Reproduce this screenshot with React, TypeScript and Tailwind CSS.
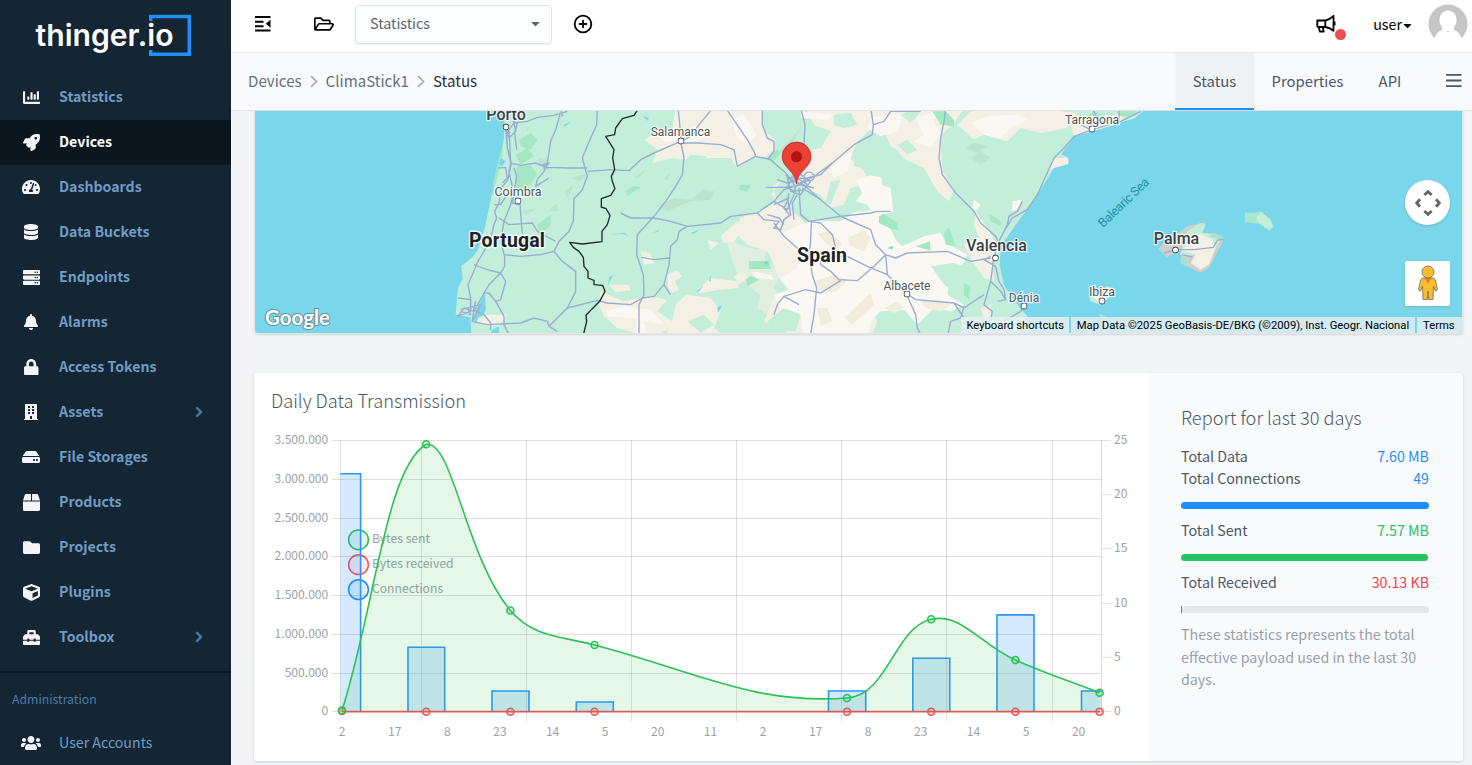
import React from "react";
import {
  FaBell, FaBox, FaBuilding, FaChartBar, FaChevronRight, FaCube, FaDatabase, FaFolder, FaHdd,
  FaLock, FaRegFolderOpen, FaRocket, FaServer, FaTachometerAlt, FaToolbox, FaUsers, FaCaretDown,
} from "react-icons/fa";
import type { IconType } from "react-icons";
import { CirclePlus } from "lucide-react";

const nav: { label: string; icon: IconType; size: number; more?: boolean }[] = [
  { label: "Statistics", icon: FaChartBar, size: 17 },
  { label: "Devices", icon: FaRocket, size: 17 },
  { label: "Dashboards", icon: FaTachometerAlt, size: 18 },
  { label: "Data Buckets", icon: FaDatabase, size: 16 },
  { label: "Endpoints", icon: FaServer, size: 17 },
  { label: "Alarms", icon: FaBell, size: 16 },
  { label: "Access Tokens", icon: FaLock, size: 16.5 },
  { label: "Assets", icon: FaBuilding, size: 16, more: true },
  { label: "File Storages", icon: FaHdd, size: 18 },
  { label: "Products", icon: FaBox, size: 17 },
  { label: "Projects", icon: FaFolder, size: 17 },
  { label: "Plugins", icon: FaCube, size: 17 },
  { label: "Toolbox", icon: FaToolbox, size: 17, more: true },
];

function Sidebar() {
  return (
    <aside className="flex h-full w-[231px] shrink-0 flex-col bg-[#142533]">
      <div className="h-[75px] shrink-0 pl-[30px] pt-[10px]">
        <svg width="166" height="50" viewBox="30 10 166 50">
          <path d="M150.750 21V16.500H189.250V54.250H150.750V50" fill="none" stroke="#1f8efa" strokeWidth="3.500" />
          <text x="35.500" y="46" textLength="138" lengthAdjust="spacingAndGlyphs" className="fill-white font-['Inter',sans-serif] text-[30px] font-semibold">thinger.io</text>
        </svg>
      </div>
      <nav className="flex flex-col">
        {nav.map(({ label, icon: Icon, size, more }) => {
          const active = label === "Devices";
          return (
            <a key={label} className={active ? "flex h-[45px] items-center bg-[#0b161f] text-white" : "flex h-[45px] items-center text-[#6f9cc4]"}>
              <span className="ml-[19px] flex w-6 justify-center pb-px text-[#f3f5f8]"><Icon size={size} /></span>
              <span className="ml-4 pb-[4px] text-[14.150px] leading-5 font-bold">{label}</span>
              {more && <FaChevronRight size={12} className="mr-[26px] mb-[2px] ml-auto stroke-current stroke-[30px] text-[#4a7ba8]" />}
            </a>
          );
        })}
      </nav>
      <div className="mt-[11px] h-[2px] shrink-0 bg-[#0b1822]" />
      <div className="mt-[16px] pl-3 text-[12.250px] leading-5 text-[#4a7ba5]">Administration</div>
      <a className="mt-[11px] flex h-[45px] shrink-0 items-center text-[#6f9cc4]">
        <span className="ml-[19px] flex w-6 justify-center text-[#f3f5f8]"><FaUsers size={20} /></span>
        <span className="ml-4 pb-[2px] text-[14.200px] leading-5">User Accounts</span>
      </a>
    </aside>
  );
}

function Header() {
  return (
    <header className="flex h-[53px] shrink-0 items-center border-b border-[#e4e6ea] bg-white text-black">
      <svg className="-mt-[4px] ml-[24px]" width="16" height="16" viewBox="0 0 16 16" fill="currentColor">
        <path d="M0 0h15.500v2H0zM0 4.700h8.500v2H0zM0 9.200h8.500v2H0zM0 13.500h15.500v2H0zM15.500 3.800v8L10.800 7.800z" />
      </svg>
      <FaRegFolderOpen size={20} className="-mt-[5px] ml-[43px]" />
      <div className="-mt-[3px] ml-[21px] flex h-[39px] w-[197px] items-center rounded border border-[#dce5e3] bg-[#fcfdfd] pr-[9px] pl-[14px] shadow-xs">
        <span className="pb-[3px] text-[14.300px] leading-5 text-[#5b6670]">Statistics</span>
        <FaCaretDown size={13} className="mb-[2px] ml-auto text-[#56626c]" />
      </div>
      <CirclePlus size={20} strokeWidth={2.200} className="-mt-[5px] ml-[21px]" />
      <svg className="-mt-px ml-auto" width="32" height="28" viewBox="1315 12 32 28" fill="none" stroke="#000" strokeWidth="1.800" strokeLinejoin="round">
        <path d="M1317.300 20.500h8v6.500h-7.200q-.8 0-.8-.8zM1325.300 20.500q4.500-1 8.200-4.700v15q-3.700-3.200-8.200-3.800M1318.700 27l1.300 4.700h3.700l-1-4.700M1334.600 21.500v4" />
        <circle cx="1340.500" cy="34.500" r="5.500" fill="#ef4e50" stroke="none" />
      </svg>
      <span className="ml-[26px] pb-[5px] text-[14.300px] leading-5">user</span>
      <FaCaretDown size={13} className="-ml-[1px] mb-px" />
      <svg className="-mt-[4px] mr-[4px] ml-[14px]" width="40" height="40" viewBox="0 0 40 40">
        <circle cx="20" cy="20" r="19.500" fill="#c6c6c6" />
        <ellipse cx="20" cy="16" rx="8.700" ry="9.500" fill="#fff" />
        <path d="M4 40L7 33Q9 27 15.500 25.500L20 28L24.500 25.500Q31 27 33 33L36 40Z" fill="#fff" />
        <path d="M14 22h12v5h-12z" fill="#fff" />
      </svg>
    </header>
  );
}

function SubHeader() {
  return (
    <div className="flex h-[58px] shrink-0 items-stretch border-b border-[#e3e5e9] bg-[#f9fafc] text-[14.850px] leading-5 text-[#4d5965]">
      <div className="ml-[17px] flex items-center pb-[3px] text-[15.100px] text-[#66717c]">
        <span>Devices</span>
        <svg width="8" height="13" viewBox="0 0 8 13" className="mx-2 mt-[3px]" fill="none" stroke="#9ba6b2" strokeWidth="1.600"><path d="M1 1l5.500 5.500L1 12" /></svg>
        <span>ClimaStick1</span>
        <svg width="8" height="13" viewBox="0 0 8 13" className="mx-2 mt-[3px]" fill="none" stroke="#9ba6b2" strokeWidth="1.600"><path d="M1 1l5.500 5.500L1 12" /></svg>
        <span className="text-[#28323d]">Status</span>
      </div>
      <div className="ml-auto flex">
        <div className="flex w-[79px] items-center justify-center border-b-2 border-[#1f8efa] bg-[#f0f1f3]">Status</div>
        <div className="flex w-[107px] items-center justify-center pb-[2px]">Properties</div>
        <div className="flex w-[58px] items-center justify-center pb-[2px]">API</div>
        <svg className="mt-[21px] mr-[10px] ml-[27px]" width="16" height="14" viewBox="0 0 16 14" fill="#4d5965"><path d="M0 0h15.500v1.800H0zM0 5.600h15.500v1.800H0zM0 11.300h15.500v1.800H0z" /></svg>
      </div>
    </div>
  );
}

const towns = [
  { name: "Porto", x: 251, y: 9.5, size: 16, dx: 251, dy: 16 },
  { name: "Coimbra", x: 263, y: 85.5, size: 12.5, dx: 263, dy: 90 },
  { name: "Salamanca", x: 425.5, y: 25.5, size: 12, dx: 426, dy: 30 },
  { name: "Tarragona", x: 837, y: 13, size: 12, dx: 837, dy: 18 },
  { name: "Valencia", x: 741.500, y: 140.5, size: 15.8, dx: 740.5, dy: 147 },
  { name: "Albacete", x: 652, y: 179, size: 12, dx: 652, dy: 183 },
  { name: "Dénia", x: 769, y: 191, size: 12, dx: 769, dy: 195 },
  { name: "Ibiza", x: 847, y: 185.5, size: 12.3, dx: 847, dy: 190 },
  { name: "Palma", x: 921.500, y: 133.5, size: 16, dx: 920.5, dy: 139 },
];

function MapDrawing() {
  return (
    <svg className="block" width="1207" height="222" viewBox="0 0 1207 222">
      <rect width="1207" height="222" fill="#7ad6ea" />
      <g transform="translate(-1 -3) scale(.33333)">
        <path fill="#c3eeda" d="M752 0L750 90L740 150L726 210L708 285L695 350L672 425L655 448L622 475L626 512L612 540L605 620L650 628L652 690H2285L2320 625L2278 575L2250 530L2237 470L2240 415L2275 365L2315 310L2350 260L2400 180L2443 168L2444 150L2422 138L2445 108L2460 85L2515 70L2590 46L2640 32L2680 0Z" />
        <g fill="#f5f0e5">
          <path d="M1265 0H1525L1530 70L1565 95L1560 125L1535 145L1500 150L1450 180L1430 150L1370 150L1300 155L1255 150L1195 165L1210 125L1170 95L1230 60L1255 65Z" />
          <path d="M1655 0H2075L2065 80L2050 135L2010 120L1970 150L1910 115L1895 80L1850 65L1810 100L1790 150L1830 190L1850 225L1790 240L1770 290L1725 300L1700 260L1650 240L1620 170L1650 130L1700 120L1730 70L1680 50Z" />
          <path d="M2035 70L2060 0L2130 0L2100 45L2060 85L2065 190L2100 245L2085 280L2050 250L2010 180L1955 155L1930 130L1990 110Z" />
          <path d="M2165 310L2210 375L2235 420L2215 470L2220 520L2190 510L2155 460L2130 410L2175 390L2160 350Z" />
          <path d="M2110 50L2150 10L2330 0L2470 15L2440 60L2360 75L2300 60L2260 100L2190 80L2160 95Z" />
          <path d="M1515 310L1460 330L1440 370L1480 410L1540 430L1580 520L1620 560L1560 570L1530 640L1630 690H1850L1870 640L1640 330L1550 260L1590 210L1555 235L1570 280Z" />
          <path d="M1415 385L1440 400L1480 420L1540 425L1530 450L1580 500L1560 540L1590 590L1540 620L1510 600L1520 560L1490 540L1450 500L1430 440Z" opacity=".6" />
          <path d="M1690 150L1770 170L1735 200L1690 195L1655 220L1640 190Z" />
          <path d="M1040 550L1110 580L1180 565L1240 575L1210 610L1270 650L1190 690L1090 660L1050 625L1035 590Z" />
          <path d="M1160 430L1190 435L1200 465L1170 470ZM1065 530L1125 530L1130 547L1085 553Z" />
          <path d="M1265 590L1295 560L1370 570L1400 610L1380 660L1420 690H1230L1255 640ZM1330 545L1370 510L1450 520L1455 540L1400 545L1340 555ZM1360 395L1395 405L1370 425Z" />
          <path d="M1240 500L1270 488L1284 505L1262 520L1275 545L1245 560ZM1400 385L1450 340L1470 360L1440 400L1410 405ZM1440 505L1470 490L1480 510L1455 530ZM2180 600L2210 590L2215 620L2190 635Z" />
          <path d="M665 640L700 620L760 620L735 655L690 650ZM2400 180L2443 168L2440 150L2400 150L2380 190ZM2460 85L2450 50L2490 25L2610 20L2600 45L2515 70Z" />
        </g>
        <g fill="#fbf8f4">
          <path d="M1585 375L1640 350L1675 338L1760 340L1800 312L1870 305L1900 345L1928 400L1945 415L2010 385L2060 375L2072 400L2140 440L2125 470L2080 470L2050 480L2085 520L2080 560L2130 590L2090 610L2040 600L1990 650L1950 605L1880 610L1850 640L1840 690H1650L1640 620L1580 600L1560 560L1605 545L1580 510L1630 480L1625 430L1590 400Z" />
          <path d="M1805 215L1850 202L1882 208L1885 232L1910 240L1918 312L1860 325L1840 290L1805 280L1825 255Z" />
          <path d="M1640 10L1740 20L1720 35L1640 30ZM1850 30L1900 20L1950 15L1930 70L1880 85L1840 60ZM1985 30L2050 10L2040 40L2060 75L2030 120L1980 100L2010 80ZM1760 150L1795 130L1780 190L1740 210L1730 180ZM1055 610L1110 595L1190 605L1230 650L1130 630L1060 625ZM1200 75L1280 80L1320 55L1370 75L1330 100L1230 100ZM1430 30L1470 20L1510 80L1480 110L1450 90ZM1490 490L1550 500L1560 515L1510 510ZM1120 595L1165 620L1180 690H1150L1145 630Z" />
          <path d="M2150 45L2200 25L2290 20L2320 35L2265 65L2240 90L2190 80ZM2275 280L2305 275L2290 305L2275 310ZM2160 275L2180 290L2165 310L2155 300Z" />
        </g>
        <g fill="#f2ecdc">
          <path d="M1690 375L1730 370L1765 410L1740 425L1710 400ZM1780 390L1830 365L1850 390L1830 430L1790 415ZM1680 520L1740 500L1780 515L1750 550L1700 555ZM1690 600L1720 600L1735 640L1700 655ZM1770 630L1850 555L1860 590L1795 650ZM1890 600L1930 580L1950 600L1920 615ZM2000 580L2050 575L2090 590L2060 610L2015 600Z" />
        </g>
        <g fill="#c3eeda">
          <path d="M1740 20L1790 15L1810 50L1770 60L1740 50ZM1930 110L1960 95L1990 125L1960 140ZM1730 220L1760 215L1730 290L1715 285ZM1540 640L1590 600L1640 620L1625 670L1560 670ZM1480 650L1510 630L1540 660L1520 680ZM2030 475L2100 465L2150 490L2180 560L2130 570L2070 530ZM1940 20L1990 0H2010L1970 45Z" />
          <path d="M1800 150L1850 130L1870 160L1840 180L1800 175ZM1290 160L1310 140L1360 145L1340 165ZM1640 270L1660 265L1650 310L1635 320ZM1300 640L1350 620L1380 650L1340 675ZM1590 70L1640 30L1650 110L1600 140L1570 120Z" />
        </g>
        <g fill="#a3e7c3">
          <path d="M795 95L830 75L850 95L830 125L800 115ZM790 175L830 170L850 200L820 240L780 250ZM785 140L820 120L840 145L800 170ZM850 350L890 320L890 350L855 385ZM1115 250L1140 233L1160 238L1120 265ZM1460 230L1490 232L1480 250L1455 245ZM1875 325L1890 318L1930 345L1932 367L1910 362L1875 345ZM2070 375L2085 357L2105 415L2075 410ZM1985 415L2028 400L2030 428ZM1485 460L1545 458L1550 483L1485 483ZM2035 10L2075 10L2100 35V55L2060 50ZM2205 318L2240 340L2242 355L2210 340ZM2130 525L2150 535L2145 575L2130 560ZM1475 515L1490 503L1515 515L1480 535ZM1540 150L1570 125L1580 135L1555 165ZM2520 8L2550 25H2500ZM2590 8H2650L2630 25H2600ZM740 130L748 130L725 230H716Z" />
        </g>
        <g fill="#b8dfcc" opacity=".75">
          <path d="M1210 295L1260 270L1310 275L1350 245L1380 250L1370 275L1310 280L1240 310ZM1230 210L1250 195L1240 220ZM930 250L960 230L940 270ZM950 210L1010 195L975 220ZM800 310L850 300L820 320ZM880 310L910 285L910 310ZM1140 210L1180 180L1160 205ZM1560 150L1640 60L1620 100ZM850 150L880 155L870 190ZM2150 150L2180 130L2210 150L2180 170ZM2135 120L2160 105L2200 115L2170 135Z" />
        </g>
        <g fill="#7ad6ea">
          <path d="M658 625L672 595L692 555L696 602L688 622L672 628L665 650ZM715 665L735 655V690H705ZM740 150L755 160L745 175L735 170ZM815 68L840 42L820 65ZM928 52L950 40L935 55ZM1062 530L1066 507L1078 502L1067 520ZM1070 380L1110 374L1125 383L1105 378ZM1310 375L1335 365L1320 378ZM1325 552L1350 532L1335 550ZM1365 518L1370 500V523ZM1390 598L1405 592L1392 615ZM1900 420L1918 413L1915 425ZM1530 462L1540 458L1542 468L1535 470ZM1166 25L1185 30L1180 38ZM1195 375L1215 366V370Z" />
        </g>
        <g fill="none" stroke="#98aed2" strokeWidth="4.200" strokeLinejoin="round">
          <path d="M758 62L760 120L772 165L762 215L742 240L735 285L722 310L728 330L720 350L712 385L690 430L672 460L655 500L642 530L650 570L650 610L612 625L630 600L660 610L690 555L705 530L740 495L752 475V445L740 400L750 340L770 290L778 250L765 190L770 165L765 60M778 0L780 45L760 70L765 90L785 70L780 45L820 40L850 28L900 22L940 10M755 60L760 120M780 40L790 45L782 75L788 125M760 120L770 165L800 172L845 165L880 178L940 180L1000 180M918 20L905 65L890 100L880 165L870 190L850 215L845 235L885 210M920 0L925 25M1030 0L1028 50L1010 90L985 150L1000 205L985 245L960 272L958 340L945 370L915 400L900 430L860 440L800 445L750 440M845 165L880 180L868 170L885 165L870 185M733 180L755 178L760 210L745 225M780 180L788 205L775 285L798 290L805 378M720 290L740 290L765 250M735 330L765 350L835 345L850 370L905 400M900 430L925 460L965 490L965 550L940 600L885 655L880 640L840 630L800 645L700 650L655 640L660 600L665 580M660 470L700 485L740 495L755 520L740 575L725 580L705 555L690 555M612 570L650 575M725 580L750 625L750 650L770 690M940 600L1030 577L1060 585L1130 590L1165 570L1200 565L1230 530M885 655L910 670M620 605L640 600L650 620L625 612M660 605L690 620L710 645V665M640 600L680 590L655 640" />
          <path d="M1000 190L1070 185L1125 188L1160 155L1200 135L1280 100L1290 150L1285 200L1265 235L1235 280L1200 325L1150 380L1148 440L1168 500L1170 560L1155 590L1155 690M1100 315L1130 330H1200L1250 340L1300 355L1400 345L1430 325L1510 315L1560 280M1300 355L1275 370L1270 395L1250 415L1245 470L1230 530M1162 448L1200 455L1245 450M1230 530L1250 560M1335 50L1310 85L1280 100M1272 0L1282 95M1335 50L1370 8M1282 105L1330 105L1400 110L1440 125L1450 175L1505 145L1550 155L1595 195L1620 225M1415 0L1480 95L1500 130L1505 145M1525 0L1525 50L1540 90L1560 100L1560 130L1540 155M1640 0L1653 50L1650 110L1645 180" />
          <path d="M1625 235L1680 205L1735 165L1800 110L1855 80L1858 50L1890 40L1910 10L2000 10M1850 0L1858 50M1640 225L1660 240L1700 275L1760 325L1805 345L1850 365L1865 410L1895 440L1900 500L1840 475L1780 445H1700M1635 240L1640 320L1665 340L1700 345L1735 380L1745 420M1665 340L1760 325L1850 315L1870 310H1910M1672 340L1670 400L1665 440L1675 500L1688 540L1680 620L1668 690M1700 430L1700 470L1730 490L1755 515L1810 518L1860 475L1895 440L1925 450L1960 435L2080 430L2150 460L2210 450M1560 345L1590 385L1635 425M1510 315L1530 335L1575 340L1560 360L1580 365L1590 335L1610 320L1600 270M1605 270L1560 290M1560 620L1570 590L1590 565L1655 545L1700 555L1760 518M1590 565L1635 590" />
          <path d="M1595 200L1625 235L1660 210L1700 200L1735 165M1535 238H1600L1640 230L1680 240M1570 215L1600 225L1640 210L1660 215L1650 230M1600 210L1610 250L1640 260L1660 230L1630 210ZM1612 205L1640 200L1670 220L1650 245L1620 250L1600 235L1615 215L1650 235M1605 255L1600 280L1590 300L1605 320M1630 260L1615 285L1620 335M1620 235L1590 245L1560 280L1600 305L1620 260L1625 235M1645 240L1700 275M1540 320L1575 330L1590 350M1650 205A16 16 0 0 0 1680 210A14 14 0 0 0 1650 205" />
          <path d="M2075 0L2070 40L2060 90L2055 150L2065 200L2105 255L2160 310L2180 345L2225 385L2235 405L2220 445L2210 520L2240 550L2255 575L2230 580M2235 400L2260 350L2265 325L2290 310L2305 280M2250 370L2275 330L2320 305L2350 260L2400 150L2430 120L2460 85L2515 65L2600 40L2660 10M2480 50L2510 65M2515 0L2530 35M2595 0L2595 40M2210 445L2190 455L2225 475L2235 520L2250 545L2255 575M2210 520L2190 590L2215 610L2210 640M1900 500L1955 555L1985 575L2100 585L2130 600L2190 560M1960 565L1985 620L1990 660L2005 690M2130 595L2120 630L2090 640L2080 690M2100 585L2130 630M2310 590L2300 610L2250 640" />
        </g>
        <path fill="none" stroke="#202a2b" strokeWidth="4" strokeLinejoin="round" d="M1155 0L1140 22L1105 32L1085 60L1082 80L1055 85L1080 125L1076 150L1082 185L1072 205L1075 220L1083 242L1070 262L1042 272V297L1056 302L1068 322L1060 350L1044 370V401L985 408L947 403L958 418L975 430L988 448L990 475L1002 490V510L1020 517L1020 530L1046 532L1053 550L1037 580L1015 602L996 622L998 640L986 690" />
      </g>
      <g transform="translate(799 -3) scale(.33333)">
        <path fill="#cdd0cc" d="M375 375L400 355L455 342L440 375L485 375L508 390L505 405L465 480L438 494L400 475L380 465L385 425L340 448L312 422L330 405L370 400Z" />
        <path fill="#c3eeda" d="M400 370L440 345L455 350L445 375L485 380L508 388L485 420L400 445L378 440Z" />
        <path fill="#f5f0e5" d="M440 377L475 395L485 420L465 470L440 485L410 465L425 440L380 425Z" />
        <path fill="#9fe5c8" d="M465 385L485 376L508 388L500 395ZM380 450L400 455L395 475L380 465Z" />
        <path fill="none" stroke="#98aed2" strokeWidth="4" d="M330 435L365 425H420L478 418L490 397L508 393M385 440L415 447" />
        <path fill="#a7e8cf" d="M573 313L600 315L622 310L650 335L660 355L647 368L615 347L573 343Z" />
        <path fill="#c3eeda" d="M607 327L622 313L650 335L655 358L640 362L615 345Z" />
        <path fill="#c3eeda" d="M108 570L160 535L178 540L170 565L140 590L108 580Z" />
        <path fill="#f5f0e5" d="M120 568L150 560L160 570L135 587Z" />
        <path fill="#a7e8cf" d="M138 617L160 628V638H138Z" />
      </g>
      <g className="font-['Roboto',sans-serif]" textAnchor="middle" paintOrder="stroke" stroke="#fff" strokeOpacity=".8" strokeLinejoin="round">
        {towns.map((t) => (
          <g key={t.name}>
            <rect x={t.dx - 2.5} y={t.dy - 2.5} width="5" height="5" rx={t.size > 13 ? 2.5 : 1.5} fill="#fff" stroke="#222" strokeOpacity="1" strokeWidth="1.300" />
            <text x={t.x} y={t.y - 0.5} fontSize={t.size} fontWeight={t.size > 13 ? 500 : 400} fill={t.size > 13 ? "#3a4142" : "#50585a"} strokeWidth="2.500">{t.name}</text>
          </g>
        ))}
        <text x="252" y="136" fontSize="19.500" fontWeight="700" fill="#202124" strokeWidth="3" textLength="76">Portugal</text>
        <text x="567" y="151" fontSize="19.500" fontWeight="700" fill="#202124" strokeWidth="3" textLength="50">Spain</text>
        <text transform="translate(871.500 94.500) rotate(-44)" fontSize="12.500" fill="#2590a6" stroke="none" textLength="65">Balearic Sea</text>
      </g>
      <path d="M541.500 73C541 60 527.200 57 527.200 45.500A14.400 14.400 0 0 1 556 45.500C556 57 542 60 541.500 73Z" fill="#ea4335" stroke="#c5221f" strokeWidth=".8" />
      <circle cx="541.500" cy="45.700" r="5.600" fill="#b31412" />
      <text x="10" y="213.500" textLength="65" lengthAdjust="spacingAndGlyphs" paintOrder="stroke" stroke="#6b8f98" strokeWidth="2" className="fill-white font-['Lato',sans-serif] text-[21.500px] font-bold">Google</text>
    </svg>
  );
}

function MapPanel() {
  return (
    <section className="relative ml-[23px] h-[223px] w-[1209px] shrink-0 overflow-hidden rounded-b border border-t-0 border-[#e3e5e9] shadow-sm">
      <MapDrawing />
      <div className="absolute right-3 bottom-[108px] flex size-[45px] items-center justify-center rounded-full bg-white shadow">
        <svg width="26" height="26" viewBox="0 0 26 26" fill="none" stroke="#666" strokeWidth="2.800"><path d="M9.300 5L13 1.600L16.700 5M9.300 21L13 24.400L16.700 21M5 9.300L1.600 13L5 16.700M21 9.300L24.400 13L21 16.700" /></svg>
      </div>
      <div className="absolute right-3 bottom-[27px] flex size-[45px] items-center justify-center rounded-[2px] bg-white pb-px shadow">
        <svg width="20" height="36" viewBox="0 0 20 36" fill="#fbbc2d" stroke="#7a7462" strokeWidth=".9">
          <path d="M5.500 13Q3.500 13 2.700 15L.6 24Q.6 26 2.500 26L4.500 21L5 34.500H9.300L10 26L10.700 34.500H15L15.500 21L17.500 26Q19.400 26 19.400 24L17.300 15Q16.500 13 14.500 13Z" />
          <path d="M6.500 12.500H13.500L10 18.500Z" fill="#e07b23" stroke="none" />
          <circle cx="10" cy="7" r="6" />
        </svg>
      </div>
      <div className="absolute right-0 bottom-0 flex h-[16px] gap-[2px] font-['Roboto',sans-serif] text-[11.250px] leading-[17px] whitespace-nowrap text-black">
        <span className="w-[108px] bg-[#e6f1f2]/85 pr-[5px] text-right">Keyboard shortcuts</span>
        <span className="w-[344px] bg-[#dcedf1]/90 text-center">Map Data ©2025 GeoBasis-DE/BKG (©2009), Inst. Geogr. Nacional</span>
        <span className="w-[45px] bg-[#dcedf1]/90 pl-[6px]">Terms</span>
      </div>
    </section>
  );
}

type Pt = { x: number; y: number };
const sent: Pt[] = [
  { x: 342, y: 710.5 }, { x: 426.2, y: 444.3 }, { x: 510.4, y: 610.5 }, { x: 594.5, y: 645 },
  { x: 847, y: 698 }, { x: 931.2, y: 619.3 }, { x: 1015.4, y: 660 }, { x: 1099.6, y: 692.7 },
];
const bars = [
  [340.5, 360.6, 473.7], [408, 444.7, 647.3], [492, 529, 691], [576.3, 613.3, 702], [828.5, 865.7, 691],
  [912.8, 949.8, 658.2], [997, 1034, 614.9], [1081.5, 1102, 691],
];
const xLabels = ["2", "17", "8", "23", "14", "5", "20", "11", "2", "17", "8", "23", "14", "5", "20"];
const leftLabels = ["3.500.000", "3.000.000", "2.500.000", "2.000.000", "1.500.000", "1.000.000", "500.000", "0"];
const rightLabels = ["25", "20", "15", "10", "5", "0"];
const legend = [
  { label: "Bytes sent", color: "#2bc155" },
  { label: "Bytes received", color: "#ef5350" },
  { label: "Connections", color: "#1f8efa" },
];

function spline(points: Pt[], tension: number): string {
  const cap = (y: number) => Math.max(440.5, Math.min(711.5, y));
  const handles = points.map((p, i) => {
    const a = points[i - 1] ?? p;
    const b = points[i + 1] ?? p;
    const da = Math.hypot(p.x - a.x, p.y - a.y);
    const db = Math.hypot(b.x - p.x, b.y - p.y);
    const fa = (tension * da) / (da + db);
    const fb = (tension * db) / (da + db);
    return {
      inX: p.x - fa * (b.x - a.x), inY: cap(p.y - fa * (b.y - a.y)),
      outX: p.x + fb * (b.x - a.x), outY: cap(p.y + fb * (b.y - a.y)),
    };
  });
  return points.map((p, i) => i === 0
    ? `M${p.x} ${p.y}`
    : `C${handles[i - 1].outX} ${handles[i - 1].outY} ${handles[i].inX} ${handles[i].inY} ${p.x} ${p.y}`).join("");
}

function Chart() {
  const line = spline(sent, 0.4);
  return (
    <svg className="block" width="870" height="325" viewBox="271 430 870 325" fill="none">
      <g fontSize="12.100" fill="#9ca2a7">
        {leftLabels.map((l, i) => <text key={l} x="328.300" y={444 + i * 38.75} textAnchor="end">{l}</text>)}
        {rightLabels.map((l, i) => <text key={l} x="1114" y={444 + i * 54.2}>{l}</text>)}
        {xLabels.map((l, i) => <text key={i} x={342.200 + i * 52.6} y="736" textAnchor="middle">{l}</text>)}
      </g>
      {legend.map((l, i) => (
        <g key={l.label}>
          <circle cx="358.500" cy={539.800 + i * 24.9} r="9.900" fill={l.color} fillOpacity=".13" stroke={l.color} strokeWidth="1.500" />
          <text x="372" y={543 + i * 25} fontSize="12.150" fill="#9ca2a7">{l.label}</text>
        </g>
      ))}
      <g stroke="#000" strokeOpacity=".12" shapeRendering="crispEdges">
        {leftLabels.map((l, i) => <path key={l} d={`M331.500 ${Math.round(440 + i * 38.75) + 0.5}H1102`} />)}
        {[421.5, 526.5, 631.5, 736.5, 841.5, 946.5, 1052.5].map((x) => <path key={x} d={`M${x} 440V721`} />)}
        <path d="M340.500 440V712M1101.500 440V712" />
        {rightLabels.map((l, i) => <path key={l} d={`M1102 ${Math.round(440 + i * 54.2) + 0.5}H1111`} />)}
      </g>
      {bars.map(([a, b, top], i) => (
        <g key={a}>
          <rect x={a} y={top} width={b - a} height={711.5 - top} fill="#1f8efa" fillOpacity=".19" />
          <path d={i === 0 ? `M${a} ${top}H${b}V711.5` : i === 7 ? `M${a} 711.500V${top}H${b}` : `M${a} 711.500V${top}H${b}V711.500`} stroke="#2d95fa" strokeWidth="1.600" />
        </g>
      ))}
      <path d="M342 711.600H1100" stroke="#ef5350" strokeWidth="1.900" />
      {sent.map((p, i) => <circle key={p.x} cx={p.x} cy={i === 0 ? 711 : 711.700} r="3.500" fill="#ef5350" fillOpacity=".15" stroke="#ef5350" strokeWidth="1.600" />)}
      <path d={`${line}V711.500H342Z`} fill="#2bc155" fillOpacity=".13" />
      <path d={line} stroke="#2bc155" strokeWidth="1.600" />
      {sent.map((p) => <circle key={p.x} cx={p.x} cy={p.y} r="3.500" fill="#2bc155" fillOpacity=".13" stroke="#2bc155" strokeWidth="1.600" />)}
    </svg>
  );
}

function Row({ label, value, tone }: { label: string; value: string; tone: string }) {
  return <div className="flex justify-between"><span>{label}</span><span className={tone}>{value}</span></div>;
}

function ReportCard() {
  return (
    <section className="mt-[39px] ml-[23px] flex h-[388px] w-[1209px] shrink-0 overflow-hidden rounded bg-white shadow-[0_1px_3px_rgba(0,0,0,0.16)]">
      <div className="w-[894px] pl-[17px]">
        <h2 className="mt-[15px] mb-[18px] text-[18.200px] leading-6 font-light text-[#4b5660]">Daily Data Transmission</h2>
        <Chart />
      </div>
      <aside className="flex-1 bg-[#f9fafc] px-[34px] pl-[33px] text-[14.250px] leading-[22px] text-[#4d5965]">
        <h2 className="mt-[32px] mb-[16px] text-[18.200px] leading-6 font-light">Report for last 30 days</h2>
        <Row label="Total Data" value="7.60 MB" tone="text-[#1f8efa]" />
        <Row label="Total Connections" value="49" tone="text-[#1f8efa]" />
        <div className="mt-[13px] h-[7px] rounded-full bg-[#1f8efa]" />
        <div className="mt-[10px]"><Row label="Total Sent" value="7.57 MB" tone="text-[#27c461]" /></div>
        <div className="mt-[13px] mr-px h-[7px] rounded-full bg-[#27c461]" />
        <div className="mt-[10px]"><Row label="Total Received" value="30.13 KB" tone="text-[#ef4444]" /></div>
        <div className="mt-[13px] flex h-[7px]"><div className="h-full w-px bg-[#ef4444]" /><div className="h-full flex-1 rounded-full bg-[#e4e6e9]" /></div>
        <p className="mt-[10px] leading-[22.500px] text-[#98a1a9]">These statistics represents the total<br />effective payload used in the last 30<br />days.</p>
      </aside>
    </section>
  );
}

export default function App() {
  return (
    <div className="flex h-[765px] w-[1472px] overflow-hidden bg-[#f3f4f6] font-['Noto_Sans_CJK_SC',sans-serif]">
      <Sidebar />
      <main className="flex min-w-0 flex-1 flex-col">
        <Header />
        <SubHeader />
        <MapPanel />
        <ReportCard />
      </main>
    </div>
  );
}
